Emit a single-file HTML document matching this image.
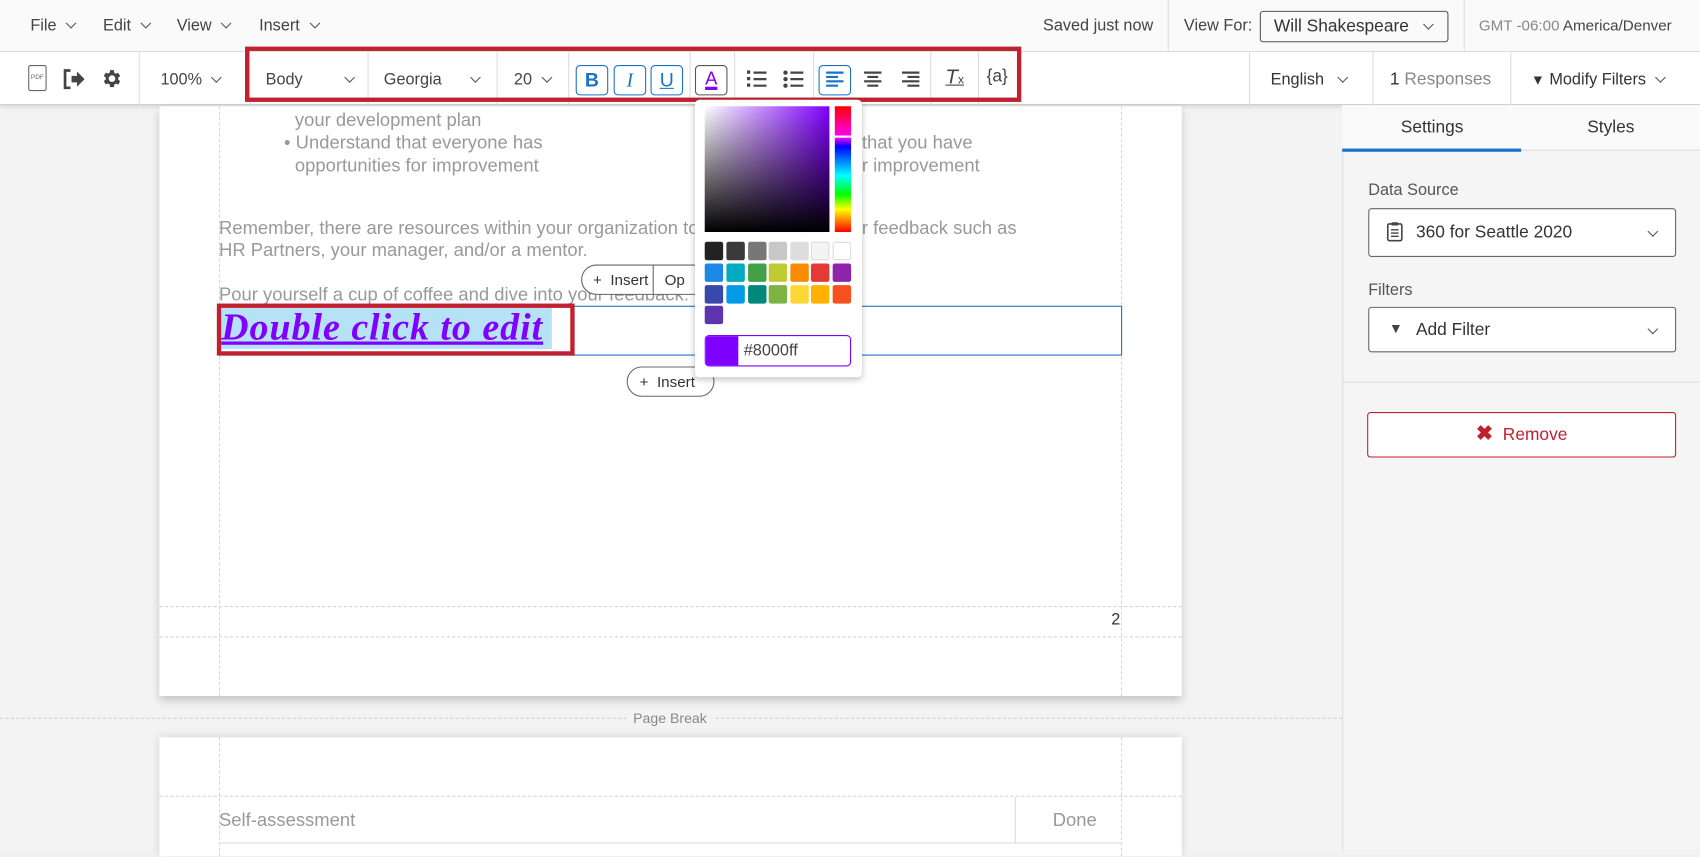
<!DOCTYPE html>
<html><head><meta charset="utf-8"><style>
*{box-sizing:border-box;margin:0;padding:0}
html,body{width:1700px;height:850px;overflow:hidden;background:#f2f2f2;font-family:"Liberation Sans",sans-serif;color:#333}
#w{position:absolute;left:0;top:0;width:1568px;height:784px;transform:scale(1.08418);transform-origin:0 0;background:#f3f3f3}
.a{position:absolute}
.t{font-size:15px;color:#444}
.chev{display:inline-block;width:7px;height:7px;border-right:1.5px solid #555;border-bottom:1.5px solid #555;transform:rotate(45deg);margin-left:10px;position:relative;top:-3px}
.sep{position:absolute;top:48px;height:49px;width:1px;background:#ddd}
.btn{position:absolute;top:60px;width:30px;height:28px;border:1px solid #1a73c8;border-radius:4px;color:#1a73c8;text-align:center;line-height:26px;font-size:18px;background:#fff}
.gray{color:#999;font-size:17px;letter-spacing:0}
.dash{position:absolute;border-color:#d6d6d6;border-style:dashed;border-width:0}
.sw{position:absolute;width:17px;height:17px;border-radius:2px}
</style></head><body><div id="w">
<div class="a" style="left:0;top:0;width:1568px;height:48px;background:#fafafa;border-bottom:1px solid #ddd"></div>
<div class="a t" style="left:28px;top:15px">File<span class="chev"></span></div>
<div class="a t" style="left:95px;top:15px">Edit<span class="chev"></span></div>
<div class="a t" style="left:163px;top:15px">View<span class="chev"></span></div>
<div class="a t" style="left:239px;top:15px">Insert<span class="chev"></span></div>
<div class="a t" style="left:962px;top:15px">Saved just now</div>
<div class="a" style="left:1077px;top:0;width:1px;height:48px;background:#ddd"></div>
<div class="a t" style="left:1092px;top:15px">View For:</div>
<div class="a t" style="left:1162px;top:10px;width:174px;height:29px;border:1px solid #555;border-radius:3px;padding:5px 12px;color:#333;font-size:16px">Will Shakespeare<span class="chev" style="margin-left:14px"></span></div>
<div class="a" style="left:1350px;top:0;width:1px;height:48px;background:#ddd"></div>
<div class="a t" style="left:1364px;top:15px;font-size:14px"><span style="color:#888">GMT -06:00</span> America/Denver</div>
<div class="a" style="left:0;top:48px;width:1568px;height:49px;background:#fff;border-bottom:1px solid #ccc;box-shadow:0 2px 3px rgba(0,0,0,.1)"></div>
<div class="a" style="left:26px;top:60px;width:17px;height:24px;border:1px solid #666;border-radius:2px;font-size:6px;line-height:22px;text-align:center;color:#666">PDF</div>
<svg class="a" style="left:57px;top:62px" width="22" height="22" viewBox="0 0 22 22"><path d="M8 3H3v16h5" fill="none" stroke="#444" stroke-width="2.5"/><path d="M9 8h5V4l7 7-7 7v-4H9z" fill="#444"/></svg>
<svg class="a" style="left:92px;top:62px" width="21" height="21" viewBox="0 0 24 24"><path fill="#444" d="M19.4 13a7.5 7.5 0 0 0 0-2l2.1-1.6-2-3.5-2.5 1a7 7 0 0 0-1.7-1L14.9 3h-4l-.4 2.7a7 7 0 0 0-1.7 1l-2.5-1-2 3.5L6.4 11a7.5 7.5 0 0 0 0 2l-2.1 1.6 2 3.5 2.5-1a7 7 0 0 0 1.700 1l.4 2.9h4l.4-2.7a7 7 0 0 0 1.7-1l2.5 1 2-3.5zM12.9 15.5a3.5 3.5 0 1 1 0-7 3.5 3.5 0 0 1 0 7z"/></svg>
<div class="sep" style="left:128px"></div>
<div class="a t" style="left:148px;top:65px">100%<span class="chev"></span></div>
<div class="sep" style="left:230px"></div>
<div class="a t" style="left:245px;top:65px">Body<span class="chev" style="margin-left:40px"></span></div>
<div class="sep" style="left:339px"></div>
<div class="a t" style="left:354px;top:65px">Georgia<span class="chev" style="margin-left:28px"></span></div>
<div class="sep" style="left:458px"></div>
<div class="a t" style="left:474px;top:65px">20<span class="chev"></span></div>
<div class="sep" style="left:524px"></div>
<div class="btn" style="left:531px;font-weight:bold">B</div>
<div class="btn" style="left:566px;font-style:italic;font-family:'Liberation Serif',serif">I</div>
<div class="btn" style="left:600px;text-decoration:underline">U</div>
<div class="sep" style="left:636px"></div>
<div class="a" style="left:641px;top:60px;width:30px;height:28px;border:1px solid #555;border-radius:4px;text-align:center;font-size:17px;line-height:24px;color:#8000ff;text-decoration:underline;text-decoration-thickness:3px">A</div>
<div class="sep" style="left:677px"></div>
<svg class="a" style="left:688px;top:64px" width="20" height="18"><g stroke="#444" stroke-width="2"><path d="M7 3h12M7 9h12M7 15h12"/></g><g fill="#444"><rect x="1" y="1" width="3" height="3"/><rect x="1" y="7" width="3" height="3"/><rect x="1" y="13" width="3" height="3"/></g></svg>
<svg class="a" style="left:722px;top:64px" width="20" height="18"><g stroke="#444" stroke-width="2"><path d="M7 3h12M7 9h12M7 15h12"/></g><g fill="#444"><circle cx="2.5" cy="3" r="2"/><circle cx="2.5" cy="9" r="2"/><circle cx="2.5" cy="15" r="2"/></g></svg>
<div class="sep" style="left:750px"></div>
<div class="a" style="left:755px;top:60px;width:30px;height:28px;border:1px solid #1a73c8;border-radius:4px"></div>
<svg class="a" style="left:761px;top:65px" width="18" height="16"><g stroke="#1a73c8" stroke-width="2"><path d="M1 2h16M1 6h11M1 10h16M1 14h11"/></g></svg>
<svg class="a" style="left:796px;top:65px" width="18" height="16"><g stroke="#444" stroke-width="2"><path d="M1 2h16M4 6h10M1 10h16M4 14h10"/></g></svg>
<svg class="a" style="left:831px;top:65px" width="18" height="16"><g stroke="#444" stroke-width="2"><path d="M1 2h16M6 6h11M1 10h16M6 14h11"/></g></svg>
<div class="sep" style="left:858px"></div>
<div class="a" style="left:872px;top:61px;font-size:19px;font-style:italic;text-decoration:underline;color:#444">T<span style="font-size:11px;font-style:normal;text-decoration:none">x</span></div>
<div class="sep" style="left:902px"></div>
<div class="a" style="left:910px;top:62px;font-size:16px;color:#444">{a}</div>
<div class="a" style="left:226px;top:43px;width:716px;height:51px;border:4px solid #c0202f"></div>
<div class="sep" style="left:1152px"></div>
<div class="a t" style="left:1172px;top:65px;color:#333">English<span class="chev" style="margin-left:14px"></span></div>
<div class="sep" style="left:1266px"></div>
<div class="a t" style="left:1282px;top:65px;font-size:16px"><span style="color:#333">1</span> <span style="color:#888">Responses</span></div>
<div class="sep" style="left:1393px"></div>
<div class="a t" style="left:1412px;top:65px;color:#333"><span style="font-size:13px">▼</span> Modify Filters<span class="chev"></span></div>
<div class="a" style="left:147px;top:98px;width:943px;height:544px;background:#fff;box-shadow:0 4px 8px rgba(0,0,0,.2)"></div>
<div class="dash" style="left:202px;top:98px;height:544px;border-left-width:1px"></div>
<div class="dash" style="left:1034px;top:98px;height:544px;border-left-width:1px"></div>
<div class="dash" style="left:147px;top:559px;width:943px;border-top-width:1px"></div>
<div class="dash" style="left:147px;top:587px;width:943px;border-top-width:1px"></div>
<div class="a gray" style="left:272px;top:101px">your development plan</div>
<div class="a gray" style="left:262px;top:122px">• Understand that everyone has</div>
<div class="a gray" style="left:272px;top:143px">opportunities for improvement</div>
<div class="a gray" style="left:795px;top:122px">that you have</div>
<div class="a gray" style="left:795px;top:143px">r improvement</div>
<div class="a gray" style="left:202px;top:201px">Remember, there are resources within your organization to h</div>
<div class="a gray" style="left:795px;top:201px">r feedback such as</div>
<div class="a gray" style="left:202px;top:221px">HR Partners, your manager, and/or a mentor.</div>
<div class="a gray" style="left:202px;top:262px">Pour yourself a cup of coffee and dive into your feedback.</div>
<div class="a" style="left:536px;top:244px;width:120px;height:28px;border:1px solid #666;border-radius:14px;background:#fff;font-size:14px;line-height:26px;padding-left:10px;color:#333">+&nbsp;&nbsp;Insert<span style="display:inline-block;border-left:1px solid #666;margin-left:4px;padding-left:10px">Op</span></div>
<div class="a" style="left:202px;top:282px;width:833px;height:46px;border:1px solid #1a73c8"></div>
<div class="a" style="left:204px;top:284px;width:305px;height:38px;background:#b6e2f5"></div>
<div class="a" style="left:204px;top:282px;font-family:'Liberation Serif',Georgia,serif;font-size:35px;letter-spacing:0.9px;font-weight:bold;font-style:italic;color:#8000ff;text-decoration:underline;white-space:nowrap">Double click to edit</div>
<div class="a" style="left:200px;top:280px;width:330px;height:48px;border:4px solid #c0202f"></div>
<div class="a" style="left:578px;top:338px;width:81px;height:28px;border:1px solid #666;border-radius:14px;background:#fff;font-size:14px;line-height:26px;padding-left:11px;color:#333">+&nbsp;&nbsp;Insert</div>
<div class="a" style="left:1025px;top:563px;font-size:15px;color:#333">2</div>
<div class="dash" style="left:0;top:662px;width:1238px;border-top-width:1px;border-color:#ccc"></div>
<div class="a" style="left:578px;top:655px;padding:0 6px;background:#f3f3f3;font-size:13px;color:#888">Page Break</div>
<div class="a" style="left:147px;top:680px;width:943px;height:110px;background:#fff;box-shadow:0 0 8px rgba(0,0,0,.15)"></div>
<div class="dash" style="left:202px;top:680px;height:110px;border-left-width:1px"></div>
<div class="dash" style="left:1034px;top:680px;height:110px;border-left-width:1px"></div>
<div class="dash" style="left:147px;top:734px;width:943px;border-top-width:1px"></div>
<div class="a" style="left:202px;top:735px;width:832px;height:43px;border-bottom:1px solid #ddd"></div>
<div class="a" style="left:936px;top:735px;width:1px;height:43px;background:#ddd"></div>
<div class="a gray" style="left:202px;top:747px">Self-assessment</div>
<div class="a gray" style="left:971px;top:747px">Done</div>
<div class="a" style="left:641px;top:92px;width:154px;height:256px;background:#fff;border-radius:4px;box-shadow:0 2px 6px rgba(0,0,0,.25)"></div>
<div class="a" style="left:650px;top:98px;width:115px;height:116px;background:linear-gradient(to top,#000,rgba(0,0,0,0)),linear-gradient(to right,#fff,#8000ff)"></div>
<div class="a" style="left:770px;top:98px;width:15px;height:116px;background:linear-gradient(to bottom,#f00 0%,#f0f 25%,#00f 32%,#0ff 55%,#0f0 70%,#ff0 82%,#f00 100%)"></div>
<div class="a" style="left:770px;top:125px;width:15px;height:2px;background:#fff"></div>
<div class="sw" style="left:650px;top:223px;background:#222"></div><div class="sw" style="left:670px;top:223px;background:#3a3a3a"></div><div class="sw" style="left:690px;top:223px;background:#777"></div><div class="sw" style="left:709px;top:223px;background:#c8c8c8"></div><div class="sw" style="left:729px;top:223px;background:#ddd"></div><div class="sw" style="left:748px;top:223px;background:#f4f4f4;border:1px solid #ddd"></div><div class="sw" style="left:768px;top:223px;background:#fff;border:1px solid #ddd"></div>
<div class="sw" style="left:650px;top:243px;background:#1e88e5"></div><div class="sw" style="left:670px;top:243px;background:#00acc1"></div><div class="sw" style="left:690px;top:243px;background:#43a047"></div><div class="sw" style="left:709px;top:243px;background:#c0ca33"></div><div class="sw" style="left:729px;top:243px;background:#fb8c00"></div><div class="sw" style="left:748px;top:243px;background:#e53935"></div><div class="sw" style="left:768px;top:243px;background:#8e24aa"></div>
<div class="sw" style="left:650px;top:263px;background:#3949ab"></div><div class="sw" style="left:670px;top:263px;background:#039be5"></div><div class="sw" style="left:690px;top:263px;background:#00897b"></div><div class="sw" style="left:709px;top:263px;background:#7cb342"></div><div class="sw" style="left:729px;top:263px;background:#fdd835"></div><div class="sw" style="left:748px;top:263px;background:#ffb300"></div><div class="sw" style="left:768px;top:263px;background:#f4511e"></div>
<div class="sw" style="left:650px;top:282px;background:#5e35b1"></div>
<div class="a" style="left:650px;top:309px;width:135px;height:29px;border:1px solid #8000ff;border-radius:4px;overflow:hidden;background:#fff"><div style="position:absolute;left:0;top:0;width:30px;height:29px;background:#8000ff"></div><div style="position:absolute;left:35px;top:5px;font-size:15px;color:#444">#8000ff</div></div>
<div class="a" style="left:1238px;top:97px;width:330px;height:687px;background:#f5f5f5;border-left:1px solid #ddd"></div>
<div class="a" style="left:1238px;top:97px;width:330px;height:42px;background:#fafafa;border-bottom:1px solid #ddd"></div>
<div class="a" style="left:1238px;top:137px;width:165px;height:3px;background:#1a73c8"></div>
<div class="a" style="left:1292px;top:109px;font-size:16px;color:#333">Settings</div>
<div class="a" style="left:1464px;top:109px;font-size:16px;color:#333">Styles</div>
<div class="a t" style="left:1262px;top:167px;color:#555">Data Source</div>
<div class="a" style="left:1262px;top:192px;width:284px;height:45px;border:1px solid #666;border-radius:3px;background:#fff"></div>
<svg class="a" style="left:1279px;top:204px" width="15" height="19"><rect x="1" y="2.5" width="13" height="15.5" rx="1.5" fill="none" stroke="#444" stroke-width="1.5"/><rect x="4.5" y="1" width="6" height="3" fill="#444"/><path d="M4 8h7M4 11h7M4 14h7" stroke="#444" stroke-width="1.3"/></svg>
<div class="a" style="left:1306px;top:206px;font-size:16px;color:#333">360 for Seattle 2020</div>
<div class="a" style="left:1521px;top:207px"><span class="chev" style="margin:0"></span></div>
<div class="a t" style="left:1262px;top:259px;color:#555">Filters</div>
<div class="a" style="left:1262px;top:283px;width:284px;height:42px;border:1px solid #666;border-radius:3px;background:#fff"></div>
<div class="a" style="left:1281px;top:295px;font-size:13px;color:#444">▼</div>
<div class="a" style="left:1306px;top:296px;font-size:16px;color:#333">Add Filter</div>
<div class="a" style="left:1521px;top:297px"><span class="chev" style="margin:0"></span></div>
<div class="a" style="left:1238px;top:352px;width:330px;height:1px;background:#ddd"></div>
<div class="a" style="left:1261px;top:380px;width:285px;height:42px;border:1px solid #c0202f;border-radius:3px;background:#fff;text-align:center;line-height:40px;font-size:16px;color:#c0202f"><span style="font-weight:bold;font-size:19px">✖</span>&nbsp; Remove</div>
</div></body></html>
